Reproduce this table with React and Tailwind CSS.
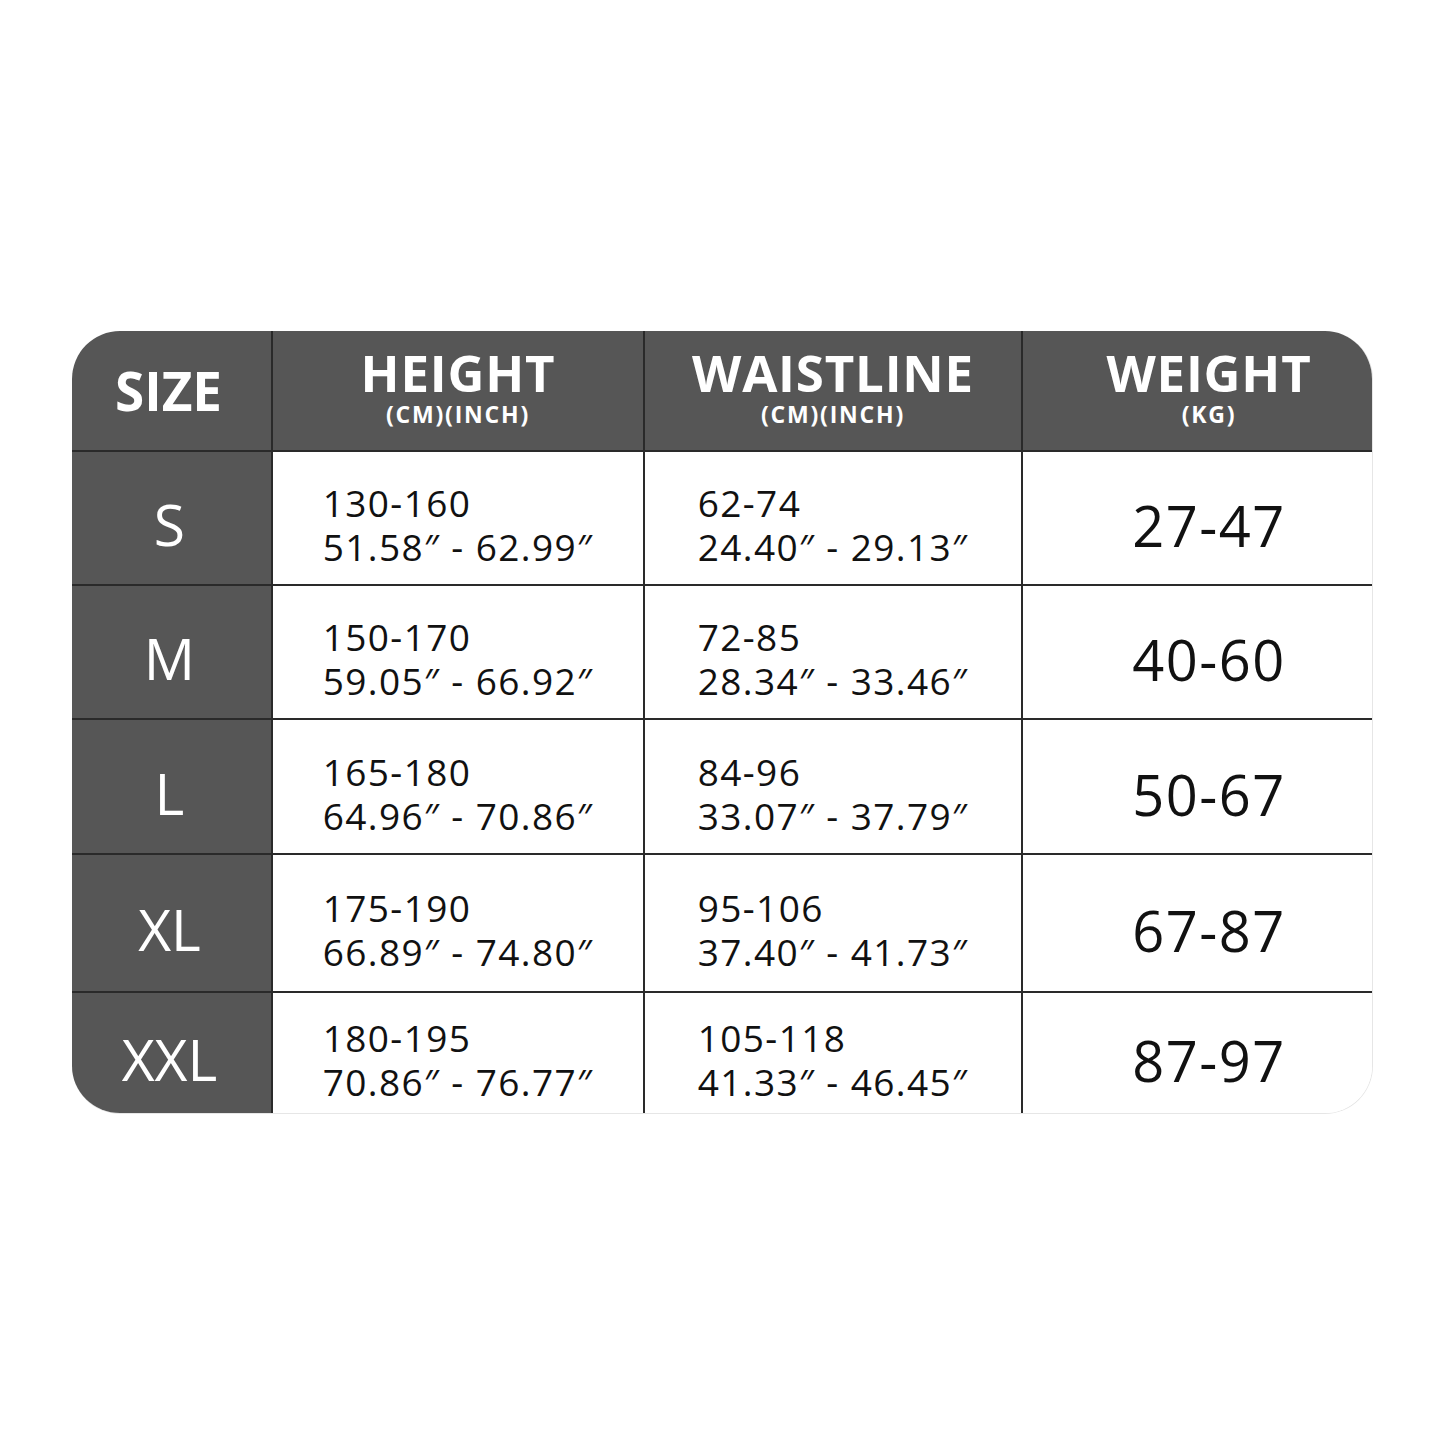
import React from 'react';

const rows = [
  { size: 'S', h: ['130-160', '51.58″ - 62.99″'], w: ['62-74', '24.40″ - 29.13″'], kg: '27-47', ht: 'h-[134px]' },
  { size: 'M', h: ['150-170', '59.05″ - 66.92″'], w: ['72-85', '28.34″ - 33.46″'], kg: '40-60', ht: 'h-[134px]' },
  { size: 'L', h: ['165-180', '64.96″ - 70.86″'], w: ['84-96', '33.07″ - 37.79″'], kg: '50-67', ht: 'h-[135px]' },
  { size: 'XL', h: ['175-190', '66.89″ - 74.80″'], w: ['95-106', '37.40″ - 41.73″'], kg: '67-87', ht: 'h-[138px]' },
  { size: 'XXL', h: ['180-195', '70.86″ - 76.77″'], w: ['105-118', '41.33″ - 46.45″'], kg: '87-97', ht: 'h-[122px]' },
];

function HeadCell({ title, sub, className }) {
  return (
    <div className={`flex flex-col items-center justify-center bg-[#565656] pb-[10px] text-white ${className}`}>
      <div className="text-[51px] font-bold leading-[56px] tracking-[0.8px]">{title}</div>
      <div className="text-[23px] font-bold leading-[28px] tracking-[1.8px]">{sub}</div>
    </div>
  );
}

function TwoLine({ lines }) {
  return (
    <div className="flex items-center justify-center border-l-2 border-[#2a2a2a] bg-white pt-[14px]">
      <div className="text-left text-[37px] leading-[44px] tracking-[1.4px] text-[#111]">
        <div>{lines[0]}</div>
        <div className="whitespace-pre">{lines[1]}</div>
      </div>
    </div>
  );
}

export default function App() {
  return (
    <div className="min-h-[1445px] bg-white pl-[72px] pt-[331px]" style={{ fontFamily: '"Open Sans", "DejaVu Sans", sans-serif' }}>
      <div className="w-[1301px] overflow-hidden rounded-[48px] border-b border-r border-[#e6e6e6]">
        {/* header */}
        <div className="grid h-[119px] grid-cols-[199px_372px_378px_352px]">
          <div className="flex items-center justify-center bg-[#565656] pr-[6px] text-[53px] font-bold text-white">SIZE</div>
          <HeadCell title="HEIGHT" sub="(CM)(INCH)" className="border-l-2 border-[#2a2a2a]" />
          <HeadCell title="WAISTLINE" sub="(CM)(INCH)" className="border-l-2 border-[#2a2a2a]" />
          <HeadCell title="WEIGHT" sub="(KG)" className="border-l-2 border-[#2a2a2a] pl-[22px]" />
        </div>
        {rows.map((r) => (
          <div key={r.size} className={`grid grid-cols-[199px_372px_378px_352px] border-t-2 border-[#2a2a2a] ${r.ht}`}>
            <div className="flex items-center justify-center bg-[#565656] pr-[4px] pt-[14px] text-[57px] text-white">{r.size}</div>
            <TwoLine lines={r.h} />
            <TwoLine lines={r.w} />
            <div className="flex items-center justify-center border-l-2 border-[#2a2a2a] bg-white pl-[22px] pt-[14px] text-[56px] tracking-[1.5px] text-[#111]">
              {r.kg}
            </div>
          </div>
        ))}
      </div>
    </div>
  );
}
